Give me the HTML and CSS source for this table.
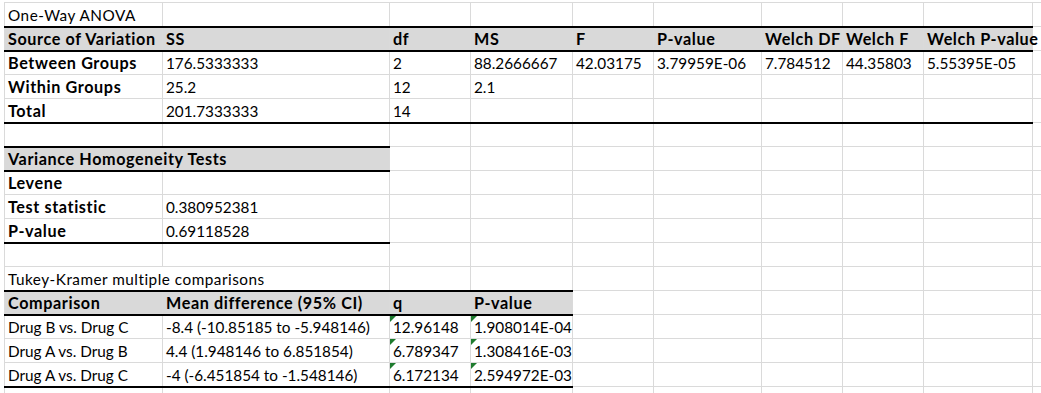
FILE: index.html
```html
<!DOCTYPE html>
<html lang="en">
<head>
<meta charset="utf-8">
<title>One-Way ANOVA</title>
<link rel="stylesheet" href="styles.css">
</head>
<body>
<table class="sheet">
  <colgroup>
    <col class="c-a"><col class="c-b"><col class="c-c"><col class="c-d"><col class="c-e">
    <col class="c-f"><col class="c-g"><col class="c-h"><col class="c-i"><col class="c-j">
  </colgroup>
  <tbody>
    <tr><td class="title">One-Way ANOVA</td><td></td><td></td><td></td><td></td><td></td><td></td><td></td><td></td><td></td></tr>
    <tr class="hdr">
      <td class="th">Source of Variation</td><td class="th">SS</td><td class="th">df</td><td class="th">MS</td><td class="th">F</td><td class="th">P-value</td><td class="th">Welch DF</td><td class="th">Welch F</td><td class="th">Welch P-value</td><td class="plain"></td>
    </tr>
    <tr><td class="b">Between Groups</td><td>176.5333333</td><td>2</td><td>88.2666667</td><td>42.03175</td><td>3.79959E-06</td><td>7.784512</td><td>44.35803</td><td>5.55395E-05</td><td></td></tr>
    <tr><td class="b">Within Groups</td><td>25.2</td><td>12</td><td>2.1</td><td></td><td></td><td></td><td></td><td></td><td></td></tr>
    <tr class="end9"><td class="b">Total</td><td>201.7333333</td><td>14</td><td></td><td></td><td></td><td></td><td></td><td></td><td></td></tr>
    <tr><td></td><td></td><td></td><td></td><td></td><td></td><td></td><td></td><td></td><td></td></tr>
    <tr class="hdr2">
      <td class="th" colspan="2">Variance Homogeneity Tests</td><td></td><td></td><td></td><td></td><td></td><td></td><td></td><td></td>
    </tr>
    <tr><td class="b">Levene</td><td></td><td></td><td></td><td></td><td></td><td></td><td></td><td></td><td></td></tr>
    <tr><td class="b">Test statistic</td><td>0.380952381</td><td></td><td></td><td></td><td></td><td></td><td></td><td></td><td></td></tr>
    <tr class="end2"><td class="b">P-value</td><td>0.69118528</td><td></td><td></td><td></td><td></td><td></td><td></td><td></td><td></td></tr>
    <tr><td></td><td></td><td></td><td></td><td></td><td></td><td></td><td></td><td></td><td></td></tr>
    <tr><td class="title" colspan="2">Tukey-Kramer multiple comparisons</td><td></td><td></td><td></td><td></td><td></td><td></td><td></td><td></td></tr>
    <tr class="hdr4">
      <td class="th">Comparison</td><td class="th">Mean difference (95% CI)</td><td class="th">q</td><td class="th">P-value</td><td></td><td></td><td></td><td></td><td></td><td></td>
    </tr>
    <tr><td>Drug B vs. Drug C</td><td>-8.4 (-10.85185 to -5.948146)</td><td class="txtnum">12.96148</td><td class="txtnum">1.908014E-04</td><td></td><td></td><td></td><td></td><td></td><td></td></tr>
    <tr><td>Drug A vs. Drug B</td><td>4.4 (1.948146 to 6.851854)</td><td class="txtnum">6.789347</td><td class="txtnum">1.308416E-03</td><td></td><td></td><td></td><td></td><td></td><td></td></tr>
    <tr class="end4"><td>Drug A vs. Drug C</td><td>-4 (-6.451854 to -1.548146)</td><td class="txtnum">6.172134</td><td class="txtnum">2.594972E-03</td><td></td><td></td><td></td><td></td><td></td><td></td></tr>
    <tr><td></td><td></td><td></td><td></td><td></td><td></td><td></td><td></td><td></td><td></td></tr>
  </tbody>
</table>
</body>
</html>
```

FILE: styles.css
```css
html, body {
  margin: 0;
  padding: 0;
  background: #ffffff;
  overflow: hidden;
}

body {
  padding: 2px 0 0 4px;
}

.sheet {
  border-collapse: collapse;
  table-layout: fixed;
  width: 1037px;
  font-family: Lato, "Liberation Sans", sans-serif;
  font-size: 15.3px;
  color: #000;
}

.c-a { width: 158px; }
.c-b { width: 227px; }
.c-c { width: 81px; }
.c-d { width: 102px; }
.c-e { width: 81px; }
.c-f { width: 108px; }
.c-g { width: 81px; }
.c-h { width: 81px; }
.c-i { width: 109px; }
.c-j { width: 9px; }

.sheet tr {
  height: 24px;
}

.sheet td {
  border: 1px solid #dadada;
  padding: 0 0 2px 3px;
  vertical-align: bottom;
  line-height: 18px;
  white-space: nowrap;
  overflow: visible;
  position: relative;
}

.sheet td:last-child {
  border-right: none;
  padding: 0;
}

.sheet td.title {
  letter-spacing: 0.5px;
}

.sheet td.b,
.sheet td.th {
  font-weight: 700;
  font-size: 16.2px;
  letter-spacing: 0.6px;
}

.sheet td.th {
  background: #d9d9d9;
}

/* ANOVA header block: columns A–I */
.hdr td { border-top: 2px solid #000; border-bottom: 2px solid #000; }
.hdr td.plain { border-top: 1px solid #dadada; border-bottom: 1px solid #dadada; }
.end9 td:nth-child(-n+9) { border-bottom: 2px solid #000; }

/* Variance block: columns A–B */
.hdr2 td:first-child { border-top: 2px solid #000; border-bottom: 2px solid #000; }
.end2 td:nth-child(-n+2) { border-bottom: 2px solid #000; }

/* Tukey block: columns A–D */
.hdr4 td:nth-child(-n+4) { border-top: 2px solid #000; border-bottom: 2px solid #000; }
.end4 td:nth-child(-n+4) { border-bottom: 2px solid #000; }

/* number stored as text indicator */
.txtnum::before {
  content: "";
  position: absolute;
  left: 0;
  top: 0;
  width: 0;
  height: 0;
  border-top: 6px solid #1e7b2e;
  border-right: 6px solid transparent;
}
```
